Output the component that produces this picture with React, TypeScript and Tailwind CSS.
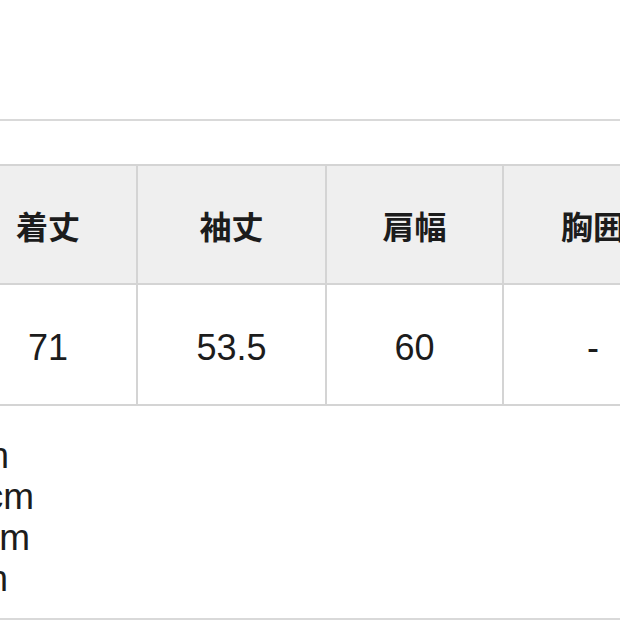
const cols = [
  { label: "着丈", value: "71", w: "w-[176px]" },
  { label: "袖丈", value: "53.5", w: "w-[189px]" },
  { label: "肩幅", value: "60", w: "w-[177px]" },
  { label: "胸囲", value: "-", w: "w-[180px]" },
]

const notes = [
  { text: "着丈 71cm", w: "w-[9px]" },
  { text: "袖丈 53.5cm", w: "w-[34px]" },
  { text: "肩幅 60cm", w: "w-[30px]" },
  { text: "裄丈 -cm", w: "w-[8px]" },
]

export default function App() {
  return (
    <div className="w-[620px] h-[620px] overflow-hidden bg-white text-[#1c1c1c] font-['Liberation_Sans','Noto_Sans_CJK_JP',sans-serif]">
      <div className="h-[119px]" />
      <div className="h-[2px] bg-[#d9d9d9]" />
      <div className="h-[43px]" />

      {/* size table */}
      <div className="flex -ml-[40px] border-t-2 border-[#d4d4d4]">
        {cols.map((c, i) => (
          <div
            key={c.label}
            className={`${c.w} shrink-0 flex flex-col ${i > 0 ? "border-l-2 border-[#d4d4d4]" : ""}`}
          >
            <div className="h-[119px] bg-[#efefef] border-b-2 border-[#d4d4d4] flex items-center justify-center">
              <span className="text-[32px] font-bold font-['Noto_Sans_CJK_JP',sans-serif] leading-none">
                {c.label}
              </span>
            </div>
            <div className="h-[121px] pt-[6px] bg-white border-b-2 border-[#d4d4d4] flex items-center justify-center">
              <span className="text-[36px] leading-none">{c.value}</span>
            </div>
          </div>
        ))}
      </div>

      <div className="h-[29px]" />
      <div className="flex flex-col text-[37px] leading-[41px]">
        {notes.map((n) => (
          <div key={n.text} className={`${n.w} flex justify-end whitespace-nowrap`}>
            {n.text}
          </div>
        ))}
      </div>
      <div className="h-[19px]" />
      <div className="h-[2px] bg-[#d9d9d9]" />
    </div>
  )
}
